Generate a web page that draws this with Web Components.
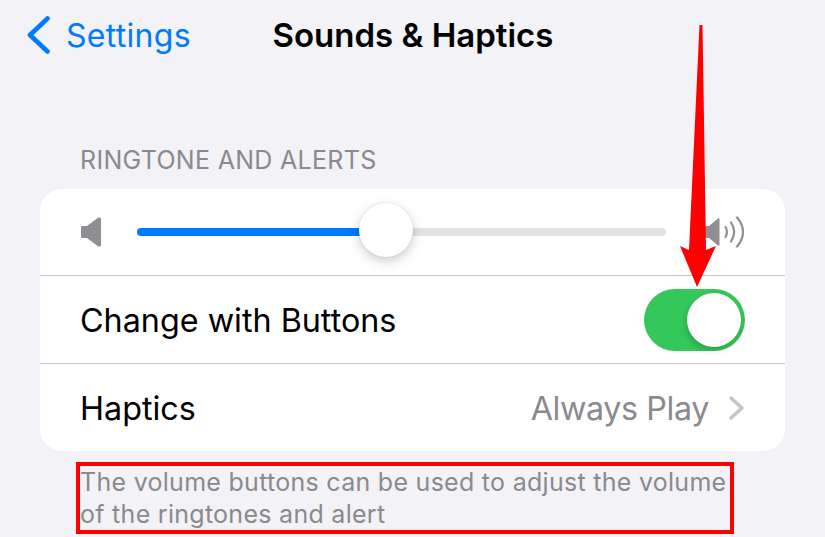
<!DOCTYPE html>
<html lang="en">
<head>
<meta charset="utf-8">
<title>Sounds &amp; Haptics</title>
<style>
html, body { margin: 0; height: 100%; background: #f2f2f7; overflow: hidden; }
body { position: relative; font-family: Inter, "Liberation Sans", sans-serif; }
</style>
</head>
<body>
<nav-bar back="Settings">Sounds &amp; Haptics</nav-bar>
<settings-section header="RINGTONE AND ALERTS" footer="The volume buttons can be used to adjust the volume of the ringtones and alert">
	<volume-row></volume-row>
	<settings-row label="Change with Buttons"><toggle-switch></toggle-switch></settings-row>
	<settings-row label="Haptics" value="Always Play" chevron></settings-row>
</settings-section>
<red-annotation></red-annotation>

<script>
class NavBar extends HTMLElement {
	constructor() {
		super().attachShadow({ mode: "open" }).innerHTML = `
<style>
:host { display: grid; grid-template-columns: 1fr auto 1fr; align-items: center; height: 70px; padding-left: 27px; box-sizing: border-box; }
a { display: flex; align-items: center; gap: 16px; color: #007aff; font-size: 32px; letter-spacing: 0.3px; }
svg { display: block; }
h1 { margin: 0; font-size: 33px; font-weight: 600; color: #000; transform: translateX(-13px); }
</style>
<a><svg width="23" height="38" viewBox="0 0 23 38" fill="none" stroke="#007aff" stroke-width="4.6" stroke-linecap="round" stroke-linejoin="round"><path d="M20.5 2.5 3 19l17.5 16.5"/></svg><span id="back"></span></a>
<h1><slot></slot></h1>
<span></span>`;
	}
	connectedCallback() {
		this.shadowRoot.getElementById("back").textContent = this.getAttribute("back");
	}
}
customElements.define("nav-bar", NavBar);

class SettingsSection extends HTMLElement {
	constructor() {
		super().attachShadow({ mode: "open" }).innerHTML = `
<style>
:host { display: block; padding: 0 40px; margin-top: 76px; }
header { padding-left: 40px; font-size: 25px; line-height: 28px; color: #8a8a8e; height: 43px; letter-spacing: 0.3px; }
section { background: #fff; border-radius: 22px; overflow: hidden; }
::slotted(*:not(:first-child)) { border-top: 1px solid #c6c6c8; }
footer { padding: 15px 40px 0; font-size: 25px; line-height: 32px; color: #8a8a8e; letter-spacing: 0.28px; }
</style>
<header id="head"></header>
<section><slot></slot></section>
<footer id="foot"></footer>`;
	}
	connectedCallback() {
		this.shadowRoot.getElementById("head").textContent = this.getAttribute("header");
		this.shadowRoot.getElementById("foot").textContent = this.getAttribute("footer");
	}
}
customElements.define("settings-section", SettingsSection);

class VolumeRow extends HTMLElement {
	constructor() {
		super().attachShadow({ mode: "open" }).innerHTML = `
<style>
:host { display: flex; align-items: center; height: 86px; padding: 0 40px; box-sizing: border-box; }
svg { display: block; flex: none; }
.track { position: relative; flex: 1; height: 8px; margin: 0 39px 0 36px; background: #e3e3e6; border-radius: 4px; }
.fill { width: 44.5%; height: 100%; background: #007aff; border-radius: 4px 0 0 4px; }
.thumb { position: absolute; left: 222px; top: -25px; width: 54px; height: 54px; border-radius: 50%; background: #fff; box-shadow: 0 4px 12px rgba(0,0,0,.2), 0 0 2px rgba(0,0,0,.12); }
</style>
<svg width="21" height="30" viewBox="0 0 21 30" fill="#8e8e93"><path d="M1 10.500C1 9.700 1.600 9 2.500 9H7L18 .8C19 0 21 .4 21 2v26c0 1.600-2 2-3 1.200L7 21H2.500C1.600 21 1 20.300 1 19.500z"/></svg>
<div class="track"><div class="fill"></div><div class="thumb"></div></div>
<svg width="40" height="32" viewBox="0 0 40 32" fill="none"><path fill="#8e8e93" d="M0 11.500C0 10.700.6 10 1.500 10H4L13 2.500C14 1.600 14.500 2.500 14.500 3.500v25c0 1-.5 1.900-1.500 1L4 22H1.500C.6 22 0 21.300 0 20.500z"/><g stroke="#8e8e93" stroke-width="2.2" stroke-linecap="round"><path d="M20.500 11c2 3.500 2 6.500 0 10"/><path d="M26 6.500c4 6 4 13 0 19"/><path d="M32 1.500c8 9 8 20 0 29"/></g></svg>`;
	}
}
customElements.define("volume-row", VolumeRow);

class SettingsRow extends HTMLElement {
	constructor() {
		super().attachShadow({ mode: "open" }).innerHTML = `
<style>
:host { display: block; padding-left: 40px; }
.row { display: flex; align-items: center; justify-content: space-between; height: 87px; padding-right: 40px; font-size: 32.3px; color: #000; }
#label, .value span { padding-top: 2px; }
.value { display: flex; align-items: center; gap: 19px; color: #8a8a8e; letter-spacing: -0.4px; }
.value[hidden] { display: none; }
svg { display: block; }
</style>
<div class="row"><span id="label"></span><slot></slot><span class="value" id="value" hidden></span></div>`;
	}
	connectedCallback() {
		const root = this.shadowRoot;
		root.getElementById("label").textContent = this.getAttribute("label");
		if (this.hasAttribute("value")) {
			const value = root.getElementById("value");
			value.hidden = false;
			value.innerHTML = `<span>${this.getAttribute("value")}</span><svg width="17" height="26" viewBox="0 0 17 26" fill="none" stroke="#c4c4c7" stroke-width="3.4" stroke-linecap="round" stroke-linejoin="round"><path d="M3 3l11 10L3 23"/></svg>`;
		}
	}
}
customElements.define("settings-row", SettingsRow);

class ToggleSwitch extends HTMLElement {
	constructor() {
		super().attachShadow({ mode: "open" }).innerHTML = `
<style>
:host { display: block; width: 101px; height: 62px; border-radius: 31px; background: #34c759; position: relative; }
i { position: absolute; right: 4px; top: 4px; width: 54px; height: 54px; border-radius: 50%; background: #fff; box-shadow: -1px 3px 6px rgba(0,0,0,.18); }
</style>
<i></i>`;
	}
}
customElements.define("toggle-switch", ToggleSwitch);

// the red markup on top of the screenshot
class RedAnnotation extends HTMLElement {
	constructor() {
		super().attachShadow({ mode: "open" }).innerHTML = `
<style>
:host { position: absolute; inset: 0; pointer-events: none; }
svg { position: absolute; left: 0; top: 0; }
.box { position: absolute; left: 76px; top: 462px; width: 658px; height: 72px; box-sizing: border-box; border: 4px solid #f00; }
</style>
<svg width="825" height="537" viewBox="0 0 825 537"><path fill="#f00" d="M699.500 25h3L706 250l10-4-19 41-17-41 9 4z"/></svg>
<div class="box"></div>`;
	}
}
customElements.define("red-annotation", RedAnnotation);
</script>
</body>
</html>
